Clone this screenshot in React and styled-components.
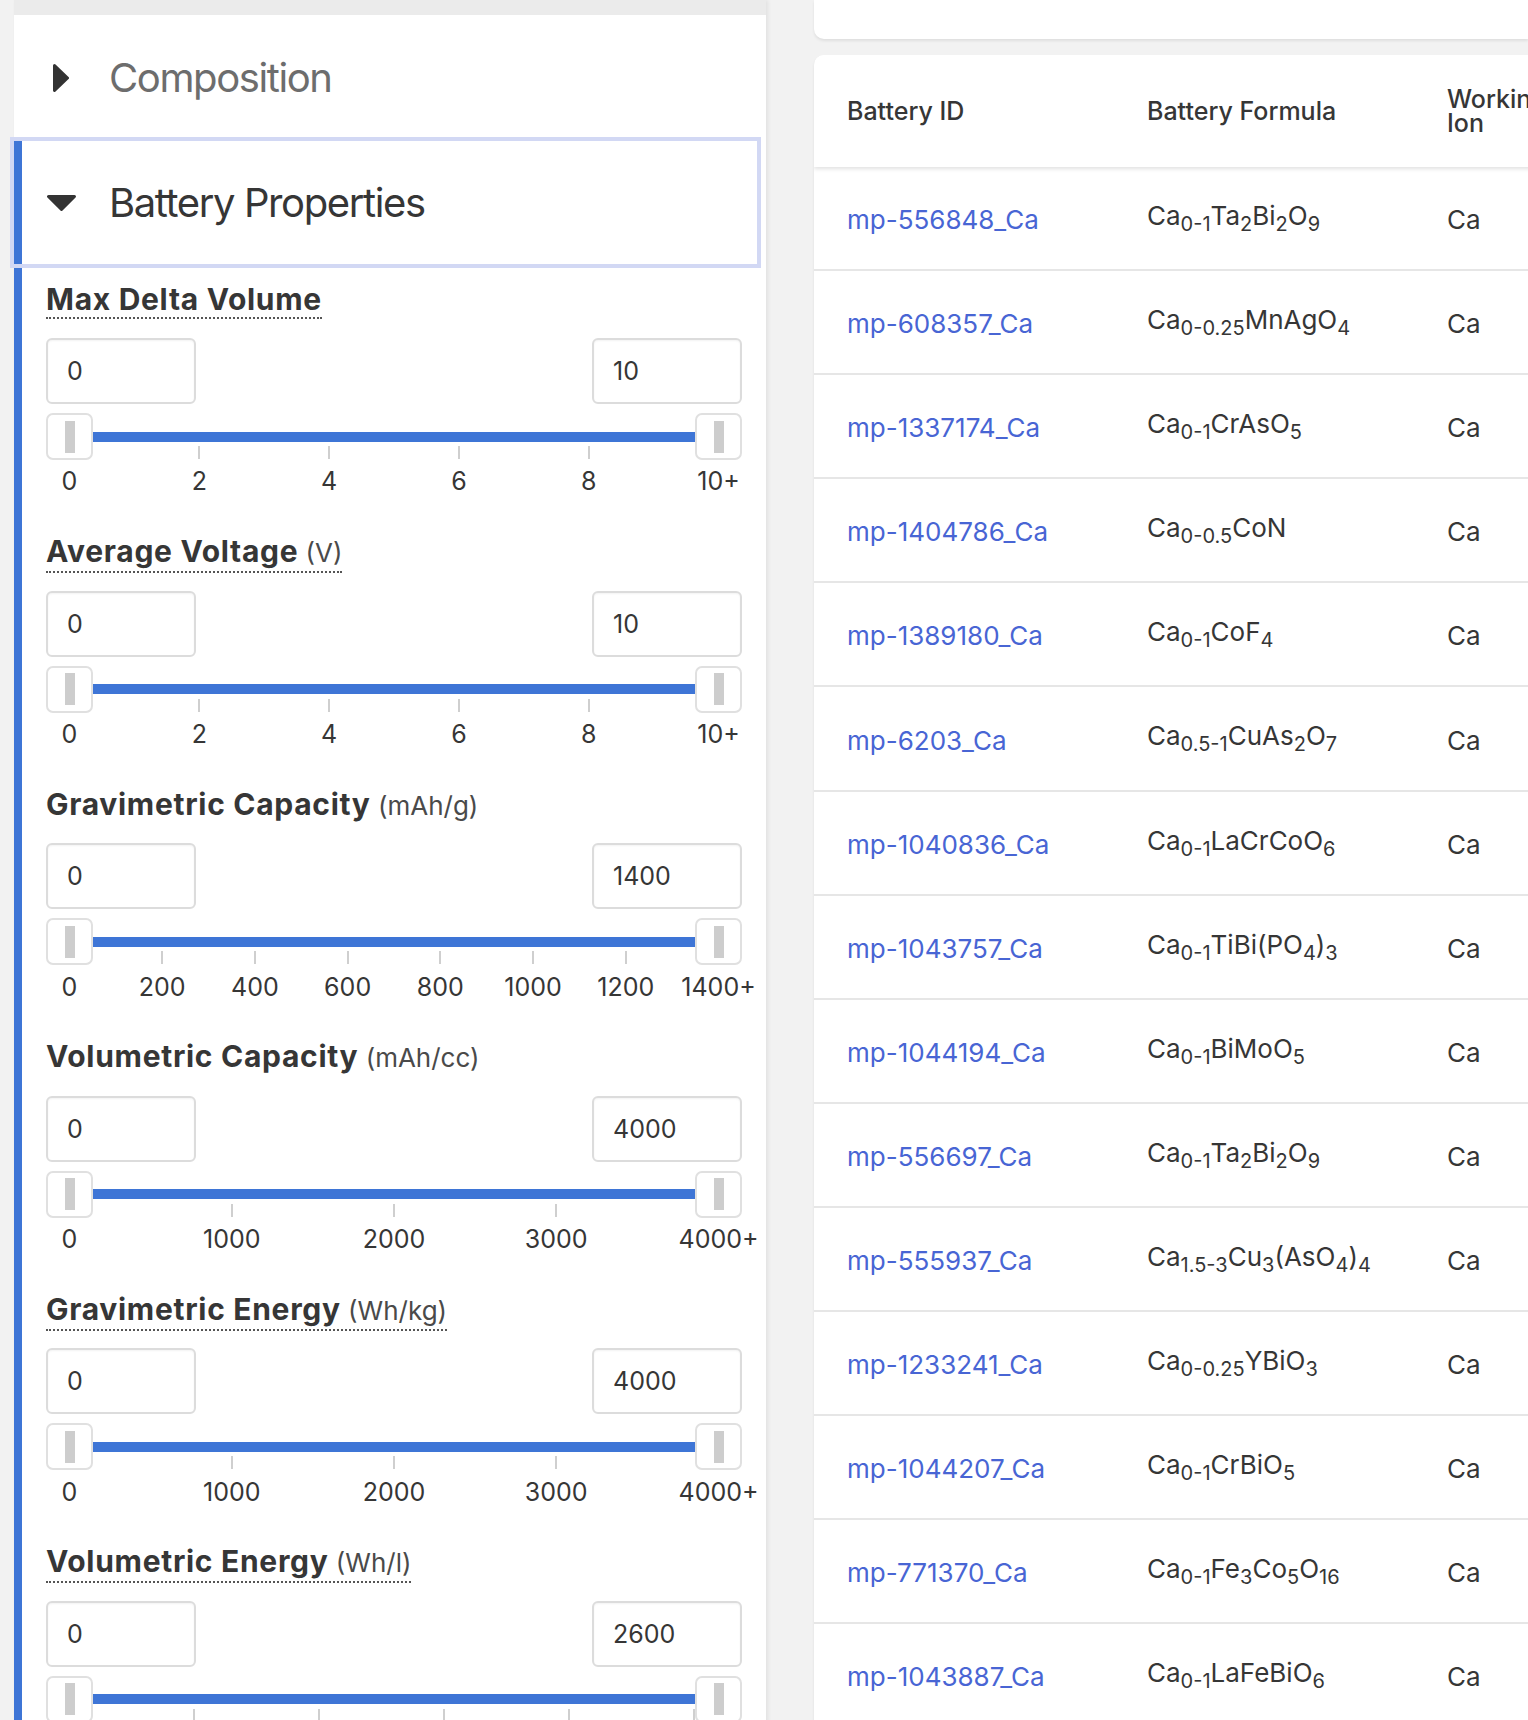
import React from "react";
import styled, { createGlobalStyle } from "styled-components";

const GlobalStyle = createGlobalStyle`
  html, body { margin: 0; padding: 0; background: #f2f2f2; }
  body { font-family: Inter, "Noto Sans", "Liberation Sans", sans-serif; color: #363636; }
  * { box-sizing: border-box; }
`;

const BLUE = "#3e75d6";

const Page = styled.div`
  display: flex;
  align-items: flex-start;
  height: 1720px;
  overflow: hidden;
`;

const Sidebar = styled.aside`
  flex: 0 0 752px;
  margin-left: 14px;
  box-shadow: 2px 0 4px rgba(0, 0, 0, 0.07);
`;

const TopStrip = styled.div`
  height: 15px;
  background: #ebebeb;
`;

const Panel = styled.div`
  background: #fff;
  min-height: 1705px;
`;

const PanelHeader = styled.div`
  display: flex;
  align-items: center;
  height: ${(p) => (p.$open ? 123 : 126)}px;
  padding-left: ${(p) => (p.$open ? 33 : 39)}px;
  gap: ${(p) => (p.$open ? 33 : 40)}px;
  margin-right: ${(p) => (p.$open ? 9 : 0)}px;
  box-shadow: ${(p) => (p.$open ? "0 0 0 4px #d2d8f4" : "none")};
  position: relative;
`;

const HeaderText = styled.span`
  font-size: 40px;
  line-height: 48px;
  letter-spacing: -1.4px;
  color: ${(p) => (p.$open ? "#363636" : "#6d6d6d")};
`;

const Section = styled.section`
  box-shadow: inset 8px 0 0 ${BLUE};
`;

const Content = styled.div`
  padding: 16.5px 24px 0 32px;
`;

const Block = styled.div`
  margin-bottom: 36.7px;
`;

const TitleRow = styled.div`
  height: 38px;
`;

const Title = styled.span`
  display: inline-block;
  font-size: 30px;
  line-height: 36px;
  font-weight: 700;
  letter-spacing: 0.7px;
  color: #363636;
  border-bottom: 2px dotted ${(p) => (p.$dotted ? "#555" : "transparent")};
`;

const Unit = styled.span`
  font-size: 26px;
  font-weight: 400;
  color: #4a4a4a;
  letter-spacing: 0;
`;

const InputRow = styled.div`
  display: flex;
  justify-content: space-between;
  margin-top: 19.5px;
`;

const NumInput = styled.input`
  width: 150px;
  height: 66px;
  border: 2px solid #dcdcdc;
  border-radius: 6px;
  padding: 0 0 0 19px;
  font-family: Inter, "Noto Sans", sans-serif;
  font-size: 25px;
  color: #363636;
  background: #fff;
  box-shadow: inset 0 1px 2px rgba(10, 10, 10, 0.05);
  outline: none;
`;

const Slider = styled.div`
  position: relative;
  display: flex;
  align-items: center;
  height: 47px;
  margin-top: 9px;
`;

const Handle = styled.div`
  flex: 0 0 47px;
  height: 47px;
  border: 2px solid #e0e0e0;
  border-radius: 7px;
  background: #fff;
  display: flex;
  align-items: center;
  justify-content: center;
`;

const Grip = styled.div`
  width: 10px;
  height: 32px;
  background: #cdcdcd;
`;

const Track = styled.div`
  flex: 1;
  height: 10px;
  background: ${BLUE};
`;

const Tick = styled.div`
  position: absolute;
  top: 33px;
  width: 2px;
  height: 13px;
  background: #cfcfcf;
`;

const Labels = styled.div`
  position: relative;
  height: 30px;
  margin-top: 6.4px;
`;

const TickLabel = styled.span`
  position: absolute;
  top: 0;
  transform: translateX(-50%);
  font-size: 25px;
  line-height: 30px;
  color: #363636;
  white-space: nowrap;
`;

const Main = styled.main`
  flex: 1;
  min-width: 0;
  margin-left: 48px;
`;

const TopCard = styled.div`
  height: 39px;
  background: #fff;
  border-radius: 0 0 0 10px;
  box-shadow: 0 2px 3px rgba(0, 0, 0, 0.08);
`;

const TableCard = styled.div`
  margin-top: 16px;
  background: #fff;
  border-radius: 10px 0 0 0;
  box-shadow: 0 2px 3px rgba(0, 0, 0, 0.08);
  overflow: hidden;
  height: 1700px;
`;

const COLS = "300px 300px 150px 320px";

const HeadRow = styled.div`
  display: grid;
  grid-template-columns: ${COLS};
  align-items: center;
  height: 112px;
  width: 1070px;
  position: relative;
  z-index: 1;
  background: #fff;
  box-shadow: 0 2px 4px rgba(0, 0, 0, 0.12);
`;

const HeadCell = styled.div`
  padding: 0 0 0 33px;
  font-size: 25px;
  line-height: 24px;
  font-weight: 500;
  color: #363636;
`;

const Row = styled.div`
  display: grid;
  grid-template-columns: ${COLS};
  align-items: center;
  width: 1070px;
  height: 104.1px;
  padding-top: 4px;
  border-bottom: 2px solid #e6e6e6;
`;

const Cell = styled.div`
  padding-left: 33px;
  font-size: 26px;
  line-height: 30px;
  color: #363636;
  white-space: nowrap;
`;

const IdLink = styled.a`
  color: #4865d4;
  text-decoration: none;
`;

const Sub = styled.sub`
  font-size: 20px;
  line-height: 30px;
`;

const CaretRight = () => (
  <svg width="16" height="28" viewBox="0 0 16 28">
    <polygon points="1.5,1.5 14.5,14 1.5,26.5" fill="#333" stroke="#333" strokeWidth="3" strokeLinejoin="round" />
  </svg>
);

const CaretDown = () => (
  <svg width="29" height="16" viewBox="0 0 29 16">
    <polygon points="1.5,1.5 27.5,1.5 14.5,14.5" fill="#333" stroke="#333" strokeWidth="3" strokeLinejoin="round" />
  </svg>
);

const filters = [
  { title: "Max Delta Volume", unit: null, dotted: true, max: 10, step: 2 },
  { title: "Average Voltage", unit: "(V)", dotted: true, max: 10, step: 2 },
  { title: "Gravimetric Capacity", unit: "(mAh/g)", dotted: false, max: 1400, step: 200 },
  { title: "Volumetric Capacity", unit: "(mAh/cc)", dotted: false, max: 4000, step: 1000 },
  { title: "Gravimetric Energy", unit: "(Wh/kg)", dotted: true, max: 4000, step: 1000 },
  { title: "Volumetric Energy", unit: "(Wh/l)", dotted: true, max: 2600, step: 500 },
];

const HALF = 23.5;
const RANGE = 649;

function RangeFilter({ f }) {
  const ticks = [];
  for (let v = f.step; v < f.max; v += f.step) ticks.push(v);
  const pos = (v) => HALF + (v / f.max) * RANGE;
  const labels = [0, ...ticks].filter((v) => f.max - v > f.step * 0.5);
  return (
    <Block>
      <TitleRow>
        <Title $dotted={f.dotted}>
          {f.title}
          {f.unit && <Unit> {f.unit}</Unit>}
        </Title>
      </TitleRow>
      <InputRow>
        <NumInput readOnly value="0" />
        <NumInput readOnly value={String(f.max)} />
      </InputRow>
      <Slider>
        <Handle><Grip /></Handle>
        <Track />
        <Handle><Grip /></Handle>
        {ticks.map((v) => (
          <Tick key={v} style={{ left: pos(v) - 1 }} />
        ))}
      </Slider>
      <Labels>
        {labels.map((v) => (
          <TickLabel key={v} style={{ left: pos(v) }}>{v}</TickLabel>
        ))}
        <TickLabel style={{ left: pos(f.max) }}>{f.max}+</TickLabel>
      </Labels>
    </Block>
  );
}

const rows = [
  ["mp-556848_Ca", "Ca_{0-1}Ta_{2}Bi_{2}O_{9}"],
  ["mp-608357_Ca", "Ca_{0-0.25}MnAgO_{4}"],
  ["mp-1337174_Ca", "Ca_{0-1}CrAsO_{5}"],
  ["mp-1404786_Ca", "Ca_{0-0.5}CoN"],
  ["mp-1389180_Ca", "Ca_{0-1}CoF_{4}"],
  ["mp-6203_Ca", "Ca_{0.5-1}CuAs_{2}O_{7}"],
  ["mp-1040836_Ca", "Ca_{0-1}LaCrCoO_{6}"],
  ["mp-1043757_Ca", "Ca_{0-1}TiBi(PO_{4})_{3}"],
  ["mp-1044194_Ca", "Ca_{0-1}BiMoO_{5}"],
  ["mp-556697_Ca", "Ca_{0-1}Ta_{2}Bi_{2}O_{9}"],
  ["mp-555937_Ca", "Ca_{1.5-3}Cu_{3}(AsO_{4})_{4}"],
  ["mp-1233241_Ca", "Ca_{0-0.25}YBiO_{3}"],
  ["mp-1044207_Ca", "Ca_{0-1}CrBiO_{5}"],
  ["mp-771370_Ca", "Ca_{0-1}Fe_{3}Co_{5}O_{16}"],
  ["mp-1043887_Ca", "Ca_{0-1}LaFeBiO_{6}"],
];

function Formula({ text }) {
  const parts = text.split(/_\{([^}]*)\}/);
  return (
    <>
      {parts.map((p, i) => (i % 2 === 1 ? <Sub key={i}>{p}</Sub> : <React.Fragment key={i}>{p}</React.Fragment>))}
    </>
  );
}

export default function App() {
  return (
    <>
      <GlobalStyle />
      <Page>
        <Sidebar>
          <TopStrip />
          <Panel>
            <PanelHeader>
              <CaretRight />
              <HeaderText>Composition</HeaderText>
            </PanelHeader>
            <Section>
              <PanelHeader $open>
                <CaretDown />
                <HeaderText $open>Battery Properties</HeaderText>
              </PanelHeader>
              <Content>
                {filters.map((f) => (
                  <RangeFilter key={f.title} f={f} />
                ))}
              </Content>
            </Section>
          </Panel>
        </Sidebar>
        <Main>
          <TopCard />
          <TableCard>
            <HeadRow>
              <HeadCell>Battery ID</HeadCell>
              <HeadCell>Battery Formula</HeadCell>
              <HeadCell>Working Ion</HeadCell>
              <HeadCell>Formula Charge</HeadCell>
            </HeadRow>
            {rows.map(([id, formula]) => (
              <Row key={id}>
                <Cell><IdLink href="#">{id}</IdLink></Cell>
                <Cell><Formula text={formula} /></Cell>
                <Cell>Ca</Cell>
                <Cell>CaO</Cell>
              </Row>
            ))}
          </TableCard>
        </Main>
      </Page>
    </>
  );
}
